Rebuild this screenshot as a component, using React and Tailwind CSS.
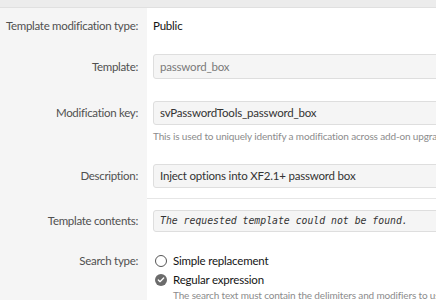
import { Check } from "lucide-react";

const labelCol = "w-[147px] shrink-0 pr-[9px] text-right text-[#505050] tracking-[-0.3px]";
const fieldCol = "flex-1 bg-white pl-[6px]";

function Input({ h, children, className = "" }) {
  return (
    <div className={`${h} flex items-center px-[6px] bg-[#f5f5f5] border border-[#dedede] rounded-[3px] whitespace-nowrap ${className}`}>
      {children}
    </div>
  );
}

export default function App() {
  return (
    <div className="w-[436px] h-[300px] overflow-hidden bg-[#f5f5f5] text-[11.5px] tracking-[-0.2px]" style={{ fontFamily: "Lato, 'Noto Sans', sans-serif" }}>
      <div className="h-[8px] bg-[#ececec] border-b border-[#e0e0e0]" />
      <div className="w-[600px]">
        {/* Template modification type */}
        <div className="flex">
          <div className={`${labelCol} py-[10px]`}>
            <div className="h-[16px] flex items-center justify-end whitespace-nowrap">Template modification type:</div>
          </div>
          <div className={`${fieldCol} py-[10px] text-[#141414]`}>
            <div className="h-[16px] flex items-center">Public</div>
          </div>
        </div>

        {/* Template */}
        <div className="flex">
          <div className={`${labelCol} pt-[10px] pb-[11px]`}>
            <div className="h-[25px] flex items-center justify-end">Template:</div>
          </div>
          <div className={`${fieldCol} pt-[10px] pb-[11px]`}>
            <Input h="h-[25px]" className="text-[#7a7a7a]">password_box</Input>
          </div>
        </div>

        {/* Modification key */}
        <div className="flex">
          <div className={`${labelCol} py-[11px]`}>
            <div className="h-[24px] flex items-center justify-end">Modification key:</div>
          </div>
          <div className={`${fieldCol} py-[11px]`}>
            <Input h="h-[24px]" className="text-[#333333]">svPasswordTools_password_box</Input>
            <p className="mt-[4px] text-[10px] leading-[14px] tracking-[-0.15px] text-[#8c8c8c] whitespace-nowrap">
              This is used to uniquely identify a modification across add-on upgrades.
            </p>
          </div>
        </div>

        {/* Description */}
        <div className="flex">
          <div className={`${labelCol} py-[10px]`}>
            <div className="h-[24px] flex items-center justify-end">Description:</div>
          </div>
          <div className={`${fieldCol} py-[10px] border-b border-[#e6e6e6]`}>
            <Input h="h-[24px]" className="text-[#333333]">Inject options into XF2.1+ password box</Input>
          </div>
        </div>

        {/* Template contents */}
        <div className="flex">
          <div className={`${labelCol} pt-[11px] pb-[10px]`}>
            <div className="h-[22px] flex items-center justify-end">Template contents:</div>
          </div>
          <div className={`${fieldCol} pt-[11px] pb-[10px]`}>
            <Input h="h-[22px]" className="text-[#333333] italic text-[9.8px] tracking-normal px-[3px]">
              <span style={{ fontFamily: "'DejaVu Sans Mono', 'Liberation Mono', monospace" }}>
                The requested template could not be found.
              </span>
            </Input>
          </div>
        </div>

        {/* Search type */}
        <div className="flex">
          <div className={`${labelCol} pt-[10px]`}>
            <div className="h-[18px] flex items-center justify-end">Search type:</div>
          </div>
          <div className={`${fieldCol} pt-[10px] pb-[10px]`}>
            <div className="h-[18px] flex items-center text-[#141414]">
              <span className="w-[12px] h-[12px] rounded-full border-[1.5px] border-[#555555] mr-[6px] ml-[2px]" />
              Simple replacement
            </div>
            <div className="h-[20px] flex items-center text-[#141414]">
              <span className="w-[12px] h-[12px] rounded-full bg-[#6b6b6b] mr-[6px] ml-[2px] flex items-center justify-center">
                <Check className="w-[8px] h-[8px] text-white" strokeWidth={4} />
              </span>
              Regular expression
            </div>
            <p className="pl-[20px] text-[10px] leading-[10px] tracking-[-0.15px] text-[#8c8c8c] whitespace-nowrap">
              The search text must contain the delimiters and modifiers to use in the regular expression.
            </p>
          </div>
        </div>
      </div>
    </div>
  );
}
